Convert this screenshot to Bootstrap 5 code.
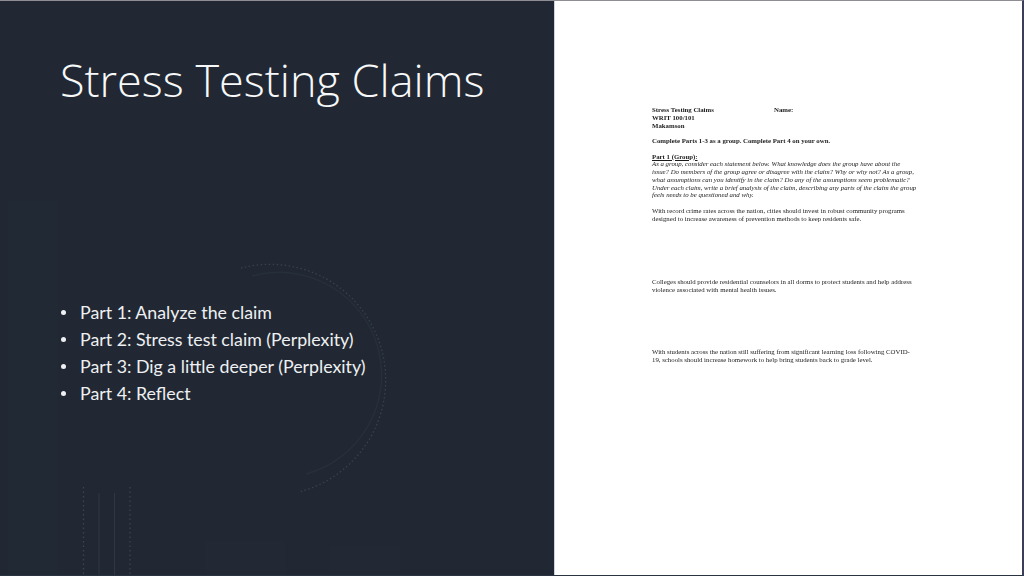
<!DOCTYPE html>
<html lang="en">
<head>
<meta charset="utf-8">
<title>Stress Testing Claims</title>
<link href="https://cdn.jsdelivr.net/npm/bootstrap@5.3.0/dist/css/bootstrap.min.css" rel="stylesheet">
<style>
html,body{margin:0;height:100%;overflow:hidden;background:#fff}
.slide-frame{width:1024px;height:576px;border-top:1px solid #8d8d93;border-bottom:1px solid #2a3341;border-right:2px solid #3a3f57;background:#fff}
.dark-pane{width:555px;flex:none;background:#212833;color:#fff;font-family:Lato,"Open Sans",sans-serif;border-right:1px solid #c9d4e4;position:relative;overflow:hidden;padding:49px 0 0 60px}
.deco-art{position:absolute;left:0;top:0;pointer-events:none}
.slide-title{position:relative;font-family:"Open Sans",sans-serif;font-size:45px;font-weight:300;line-height:60px;margin:0;color:#f7f8f9}
.bullet-list{position:relative;list-style:none;margin:189px 0 0 1px;padding:0;font-size:17.8px;line-height:27px;color:#eef0f2}
.bullet-list li{display:flex;gap:14px;align-items:baseline}
.bullet-dot{width:5px;height:5px;border-radius:50%;background:#eef0f2;flex:none;transform:translateY(-4px)}
.doc-pane{flex:1;padding:105px 0 0 97px;font-family:"Liberation Serif",serif;font-size:6.8px;line-height:7.75px;color:#1b1b1b;filter:blur(.25px)}
.doc-pane p{margin:0 0 7.75px;width:300px}
.doc-head{display:flex}
.doc-head span:first-child{width:122px}
.spaced-a{margin-bottom:56px!important}
.spaced-b{margin-bottom:54px!important}
</style>
</head>
<body>
<div class="slide-frame d-flex">
  <div class="dark-pane">
    <svg class="deco-art" width="554" height="576" viewBox="0 0 554 576" fill="none">
      <rect x="8" y="200" width="50" height="376" fill="#202934"/>
      <rect x="205" y="540" width="80" height="36" fill="#232934"/>
      <rect x="330" y="545" width="70" height="31" fill="#232934"/>
      <path d="M252 275 A101 101 0 0 1 306 473" stroke="#272f3a" stroke-width="1.5"/>
      <path d="M241 267 A115 115 0 0 1 299 491" stroke="#39414d" stroke-width="1.3" stroke-dasharray="1.5 2.5"/>
      <path d="M83.500 486V576M130 486V576" stroke="#3b434f" stroke-width="1.3" stroke-dasharray="1.5 3"/>
      <path d="M99 492V576M114.500 492V576" stroke="#2f3743" stroke-width="1"/>
    </svg>
    <h1 class="slide-title">Stress Testing Claims</h1>
    <ul class="bullet-list">
      <li><span class="bullet-dot"></span><span>Part 1: Analyze the claim</span></li>
      <li><span class="bullet-dot"></span><span>Part 2: Stress test claim (Perplexity)</span></li>
      <li><span class="bullet-dot"></span><span>Part 3: Dig a little deeper (Perplexity)</span></li>
      <li><span class="bullet-dot"></span><span>Part 4: Reflect</span></li>
    </ul>
  </div>
  <div class="doc-pane">
    <p class="fw-bold"><span class="doc-head"><span>Stress Testing Claims</span><span>Name:</span></span>WRIT 100/101<br>Makamson</p>
    <p class="fw-bold">Complete Parts 1-3 as a group. Complete Part 4 on your own.</p>
    <p><b class="text-decoration-underline">Part 1 (Group):</b><br><i>As a group, consider each statement below. What knowledge does the group have about the<br>issue? Do members of the group agree or disagree with the claim? Why or why not? As a group,<br>what assumptions can you identify in the claim? Do any of the assumptions seem problematic?<br>Under each claim, write a brief analysis of the claim, describing any parts of the claim the group<br>feels needs to be questioned and why.</i></p>
    <p class="spaced-a">With record crime rates across the nation, cities should invest in robust community programs<br>designed to increase awareness of prevention methods to keep residents safe.</p>
    <p class="spaced-b">Colleges should provide residential counselors in all dorms to protect students and help address<br>violence associated with mental health issues.</p>
    <p>With students across the nation still suffering from significant learning loss following COVID-<br>19, schools should increase homework to help bring students back to grade level.</p>
  </div>
</div>
<script src="https://cdn.jsdelivr.net/npm/bootstrap@5.3.0/dist/js/bootstrap.bundle.min.js"></script>
</body>
</html>
